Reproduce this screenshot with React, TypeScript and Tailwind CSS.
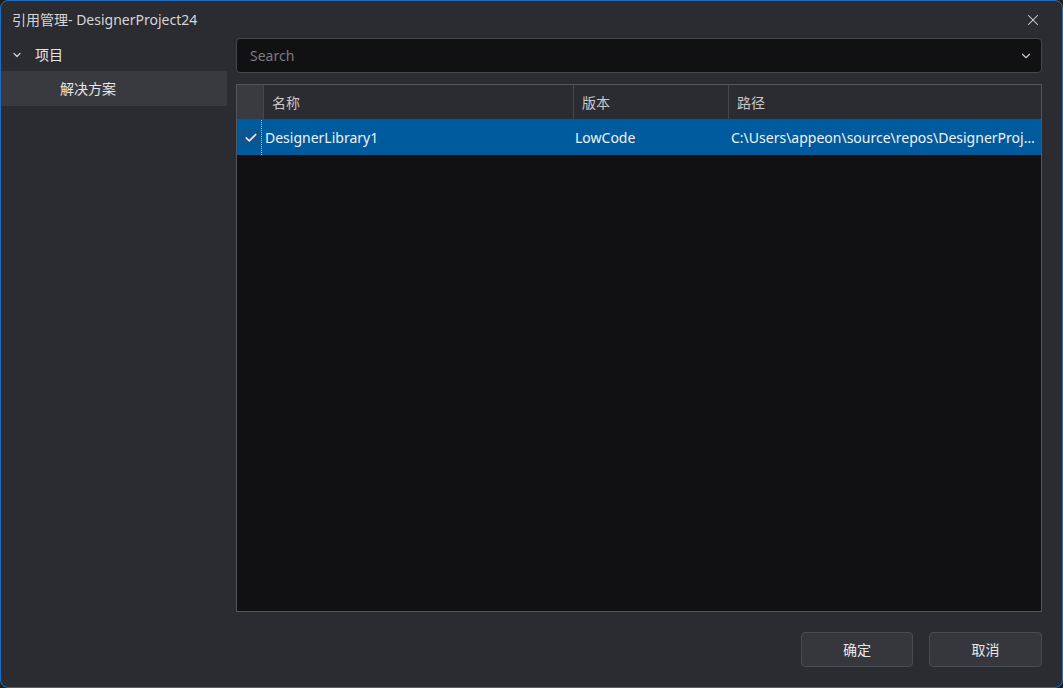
import { Check, ChevronDown, X } from "lucide-react";

const FONT = { fontFamily: '"Segoe UI", "Noto Sans", "Noto Sans CJK SC", sans-serif' };

function Sidebar() {
  return (
    <div className="w-[226px] shrink-0 flex flex-col">
      <div className="h-[33px] flex items-center pl-[10px] gap-[12px] text-[14px] text-[#e6e6e6]">
        <ChevronDown className="w-[12px] h-[12px] text-[#d0d0d0]" strokeWidth={2.5} />
        <span>项目</span>
      </div>
      <div className="h-[35px] flex items-center pl-[59px] bg-[#393a40] text-[14px] text-[#e6e6e6]">
        解决方案
      </div>
    </div>
  );
}

export default function App() {
  return (
    <div className="w-[1063px] h-[688px] bg-[#1f1f1f] overflow-hidden" style={FONT}>
      <div className="w-full h-full rounded-[8px] border border-[#1a6fc4] bg-[#2b2c31] flex flex-col">
        {/* title bar */}
        <div className="h-[37px] shrink-0 flex items-center justify-between pl-[11px] pr-[20px]">
          <span className="text-[14px] text-[#d6d6d6]">引用管理- DesignerProject24</span>
          <X className="w-[18px] h-[18px] text-[#d8d8d8]" strokeWidth={1.4} />
        </div>

        <div className="flex flex-1 min-h-0">
          <Sidebar />

          <div className="flex-1 min-w-0 flex flex-col pl-[9px] pr-[20px]">
            {/* search */}
            <div className="h-[35px] rounded-[4px] border border-[#46474c] bg-[#111114] flex items-center justify-between pl-[13px] pr-[8px]">
              <span className="text-[14px] text-[#7b7c80]">Search</span>
              <ChevronDown className="w-[14px] h-[14px] text-[#c8c8c8]" strokeWidth={2} />
            </div>

            {/* table */}
            <div className="mt-[11px] h-[528px] border border-[#55565b] bg-[#111113] flex flex-col overflow-hidden">
              <div className="h-[35px] shrink-0 flex bg-[#2b2c31] border-b border-[#45464b] text-[14px] text-[#c8c8c8]">
                <div className="w-[27px] shrink-0 bg-[#3a3b41] border-r border-[#45464b]" />
                <div className="w-[310px] shrink-0 flex items-center pl-[8px] border-r border-[#45464b]">名称</div>
                <div className="w-[155px] shrink-0 flex items-center pl-[8px] border-r border-[#45464b]">版本</div>
                <div className="flex-1 min-w-0 flex items-center pl-[8px]">路径</div>
              </div>
              <div className="h-[35px] shrink-0 flex bg-[#005a9e] text-[14px] text-[#f2f2f2]">
                <div className="w-[27px] shrink-0 flex items-center justify-center relative">
                  <div className="w-[17px] h-[17px] border border-[#1f4d78] bg-[#0a5592] flex items-center justify-center">
                    <Check className="w-[14px] h-[14px] text-[#e8e8e8]" strokeWidth={3} />
                  </div>
                  <div className="absolute right-[2px] top-0 bottom-0 border-r border-dotted border-[#9fc6e6]" />
                </div>
                <div className="w-[310px] shrink-0 flex items-center pl-[1px]">DesignerLibrary1</div>
                <div className="w-[155px] shrink-0 flex items-center pl-[1px]">LowCode</div>
                <div className="flex-1 min-w-0 flex items-center pl-[2px] pr-[4px]">
                  <span className="truncate">C:\Users\appeon\source\repos\DesignerProject24\DesignerLibrary1</span>
                </div>
              </div>
            </div>

            {/* buttons */}
            <div className="mt-[20px] flex justify-end gap-[16px]">
              <button className="w-[112px] h-[35px] rounded-[4px] border border-[#4a4b51] bg-[#36373d] text-[14px] text-[#e8e8e8]">
                确定
              </button>
              <button className="w-[113px] h-[35px] rounded-[4px] border border-[#4a4b51] bg-[#36373d] text-[14px] text-[#e8e8e8]">
                取消
              </button>
            </div>
          </div>
        </div>
      </div>
    </div>
  );
}
